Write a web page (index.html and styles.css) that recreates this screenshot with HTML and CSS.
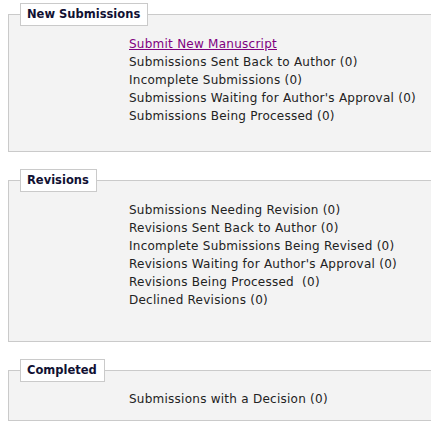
FILE: index.html
```html
<!DOCTYPE html>
<html>
<head>
<meta charset="utf-8">
<link rel="stylesheet" href="styles.css">
</head>
<body>
<fieldset class="box box-new">
  <legend class="box-title">New Submissions</legend>
  <ul class="items">
    <li><a class="item-link" href="#">Submit New Manuscript</a></li>
    <li>Submissions Sent Back to Author (0)</li>
    <li>Incomplete Submissions (0)</li>
    <li>Submissions Waiting for Author's Approval (0)</li>
    <li>Submissions Being Processed (0)</li>
  </ul>
</fieldset>
<fieldset class="box box-rev">
  <legend class="box-title">Revisions</legend>
  <ul class="items">
    <li>Submissions Needing Revision (0)</li>
    <li>Revisions Sent Back to Author (0)</li>
    <li>Incomplete Submissions Being Revised (0)</li>
    <li>Revisions Waiting for Author's Approval (0)</li>
    <li>Revisions Being Processed&nbsp; (0)</li>
    <li>Declined Revisions (0)</li>
  </ul>
</fieldset>
<fieldset class="box box-done">
  <legend class="box-title">Completed</legend>
  <ul class="items">
    <li>Submissions with a Decision (0)</li>
  </ul>
</fieldset>
</body>
</html>
```
FILE: styles.css
```css
html {
  overflow: hidden;
  background: #fff;
}
body {
  margin: 3px 0 0 8px;
  font-family: "DejaVu Sans", Verdana, sans-serif;
  font-size: 12px;
  letter-spacing: 0.25px;
  color: #222;
}
.box {
  margin: 0 0 17px 0;
  padding: 0;
  width: 440px;
  border: 1px solid #cacaca;
  border-right: none;
  background: #f3f3f3;
  min-width: 0;
}
.box-title {
  margin-left: 11px;
  padding: 3px 7px 3px 6px;
  background: #fff;
  border: 1px solid #cacaca;
  font-weight: bold;
  font-size: 11.5px;
  letter-spacing: 0;
  color: #111133;
  line-height: 15px;
}
.items {
  list-style: none;
  margin: 0;
  padding: 9px 0 26px 120px;
}
.items li {
  line-height: 18px;
  height: 18px;
  white-space: nowrap;
}
.box-rev .items {
  padding-top: 9px;
  padding-bottom: 32px;
}
.box-done .items {
  padding-top: 8px;
  padding-bottom: 12px;
}
.item-link {
  color: #800080;
  text-decoration: underline;
}
```
